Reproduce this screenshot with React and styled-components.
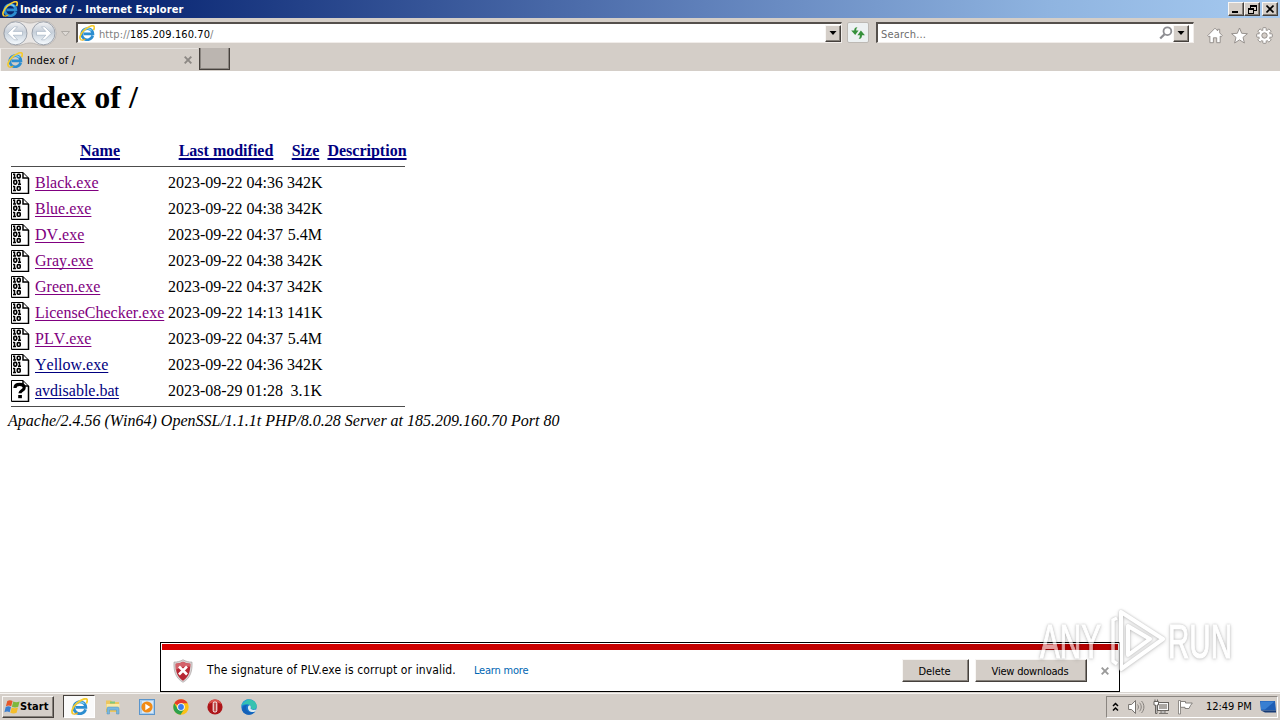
import React from "react";
import styled, { createGlobalStyle, css } from "styled-components";

const Global = createGlobalStyle`
  html, body { margin: 0; padding: 0; overflow: hidden; background: #fff; }
  * { box-sizing: border-box; }
  svg { display: block; flex: none; }
`;

const face = "#d4cec8";

const Screen = styled.div`
  position: relative;
  width: 1280px;
  height: 720px;
  display: flex;
  flex-direction: column;
  font-family: "DejaVu Sans Condensed", "DejaVu Sans", sans-serif;
  font-stretch: condensed;
  font-size: 11px;
  color: #000;
  overflow: hidden;
`;

const Label = styled.span`
  white-space: nowrap;
  line-height: 14px;
  font-size: ${(p) => p.$size || 11}px;
  letter-spacing: ${(p) => p.$track || 0}px;
  font-weight: ${(p) => (p.$bold ? 700 : 400)};
  color: ${(p) => p.$color || "#000"};
`;

const raised = css`
  border: 1px solid;
  border-color: #f8f6f4 #45403c #45403c #f8f6f4;
  box-shadow: inset -1px -1px 0 #85807a;
  background: ${face};
`;

/* ---------- title bar ---------- */
const TitleBar = styled.header`
  height: 18px;
  flex: none;
  display: flex;
  align-items: center;
  padding: 0 2px 0 2px;
  background: linear-gradient(90deg, #0a246a 0%, #0d2a76 12%, #5f80ba 55%, #8fb4e0 82%, #a6caf0 100%);
`;
const TitleText = styled(Label)`
  flex: 1;
  margin-left: 2px;
  padding-top: 1px;
`;
const CaptionButton = styled.div`
  ${raised}
  width: 16px;
  height: 14px;
  margin-left: ${(p) => p.$gap || 0}px;
  display: flex;
  align-items: center;
  justify-content: center;
`;

/* ---------- navigation bar ---------- */
const NavBar = styled.nav`
  height: 30px;
  flex: none;
  display: flex;
  align-items: flex-start;
  padding-left: 2px;
  background: ${face};
`;
const NavButtons = styled.div`
  width: 74px;
  padding-top: 2px;
`;
const Field = styled.div`
  width: ${(p) => p.$width}px;
  height: 21px;
  margin-top: 4px;
  display: flex;
  align-items: center;
  background: #fff;
  border: 1px solid;
  border-width: 2px 1px 1px 2px;
  border-color: #55504c #f1edea #f1edea #55504c;
  padding: 0 ${(p) => p.$right || 0}px 0 ${(p) => p.$left || 0}px;
`;
const FieldText = styled(Label)`
  flex: 1;
  margin-left: ${(p) => p.$left || 3}px;
  padding-top: 3px;
`;
const DropButton = styled.div`
  ${raised}
  width: 16px;
  height: 17px;
  display: flex;
  align-items: center;
  justify-content: center;
`;
const RefreshButton = styled.div`
  width: 22px;
  height: 21px;
  margin: 4px 7px 0 5px;
  border: 1px solid #bdb9b4;
  border-radius: 2px;
  background: #edf1f2;
  display: flex;
  align-items: center;
  justify-content: center;
`;
const Tools = styled.div`
  display: flex;
  gap: 8px;
  margin: 9px 0 0 13px;
`;

/* ---------- tabs ---------- */
const TabBar = styled.div`
  height: 23px;
  flex: none;
  display: flex;
  background: ${face};
`;
const Tab = styled.div`
  width: 198px;
  display: flex;
  align-items: center;
  padding: 0 6px 0 6px;
  border-left: 1px solid #f2efec;
  border-top: 1px solid #e6e2de;
`;
const TabText = styled(Label)`
  flex: 1;
  margin-left: 4px;
  padding-top: 2px;
`;
const NewTab = styled.div`
  width: 31px;
  height: 22px;
  margin-left: 1px;
  background: #bbb5b0;
  border: solid #45403c;
  border-width: 0 1px 1px 1px;
  box-shadow: inset 1px 0 0 #8a8580, inset -1px -1px 0 #8a8580;
`;

/* ---------- directory page ---------- */
const Page = styled.main`
  flex: 1;
  background: #fff;
  padding: 8px 8px 0;
  font-family: "Liberation Serif", "Times New Roman", serif;
  font-stretch: normal;
  font-kerning: none;
  font-size: 16px;
`;
const Heading = styled.h1`
  margin: 0 0 23px;
  font-size: 32px;
  line-height: 37px;
`;
const Listing = styled.table`
  width: 401px;
  table-layout: fixed;
  border-spacing: 2px;
  border-collapse: separate;
  line-height: 18px;
`;
const Row = styled.tr`
  height: ${(p) => p.$height || 24}px;
`;
const Cell = styled.td`
  padding: 0 1px;
  vertical-align: middle;
  white-space: nowrap;
  text-align: ${(p) => p.$align || "left"};
`;
const HeadCell = styled.th`
  padding: 0 0 0 2px;
  white-space: nowrap;
`;
const Link = styled.a`
  color: ${(p) => (p.$visited ? "#800080" : "#000080")};
  text-decoration: underline;
  text-decoration-thickness: ${(p) => (p.$thick ? 2 : 1)}px;
  text-underline-offset: 2px;
  text-decoration-skip-ink: none;
`;
const RuleCell = styled.td`
  padding: ${(p) => p.$top}px 2px 0 1px;
  vertical-align: top;
`;
const Rule = styled.div`
  height: 1px;
  background: #4c4c4c;
`;
const Footer = styled.address`
  line-height: 18px;
  margin-top: 2px;
  font-style: italic;
  white-space: nowrap;
`;

/* ---------- notification ---------- */
const Notice = styled.section`
  position: absolute;
  left: 160px;
  top: 642px;
  width: 960px;
  height: 50px;
  padding: 1px;
  background: #fff;
  border: 1px solid #000;
`;
const NoticeStripe = styled.div`
  height: 6px;
  background: linear-gradient(90deg, #d90000, #b40000);
`;
const NoticeBody = styled.div`
  height: 41px;
  display: flex;
  align-items: center;
  padding: 0 9px 0 11px;
`;
const NoticeText = styled(Label)`
  margin: 0 0 ${(p) => p.$bottom || 0}px ${(p) => p.$left}px;
`;
const Spacer = styled.div`
  flex: 1;
`;
const PushButton = styled.button`
  ${raised}
  width: ${(p) => p.$width}px;
  height: 23px;
  margin: 0 ${(p) => p.$gap}px 0 0;
  padding: 2px 2px 0 0;
  font: inherit;
`;

/* ---------- taskbar ---------- */
const Taskbar = styled.footer`
  height: 28px;
  flex: none;
  display: flex;
  align-items: center;
  background: ${face};
  border-top: 1px solid #d8d4cf;
  box-shadow: inset 0 1px 0 #f6f4f2;
  padding: 0 2px 0 2px;
`;
const StartButton = styled.div`
  ${raised}
  width: 52px;
  height: 22px;
  display: flex;
  align-items: center;
  padding-left: 1px;
`;
const TaskItems = styled.div`
  display: flex;
  margin-left: 9px;
  gap: 2px;
  flex: 1;
`;
const TaskItem = styled.div`
  width: 32px;
  height: 23px;
  display: flex;
  align-items: center;
  justify-content: center;
  ${(p) =>
    p.$active &&
    css`
      background: #fafafa;
      border: 1px solid;
      border-color: #45403c #fff #fff #45403c;
    `}
`;
const Tray = styled.div`
  width: 172px;
  height: 22px;
  display: flex;
  align-items: center;
  border: 1px solid;
  border-color: #8a8580 #fff #fff #8a8580;
  padding: 0 1px 0 5px;
`;
const TrayIcon = styled.div`
  margin-right: ${(p) => p.$gap}px;
`;

/* ---------- watermark ---------- */
const Watermark = styled.div`
  position: absolute;
  left: 1038px;
  top: 600px;
  width: 200px;
  height: 80px;
  filter: drop-shadow(0 0 1px rgba(0, 0, 0, 0.35)) drop-shadow(0 1px 2px rgba(0, 0, 0, 0.25));
  opacity: 0.62;
`;

/* ---------- icons ---------- */
const IELogo = ({ size = 16 }) => (
  <svg width={size} height={size} viewBox="0 0 16 16">
    <path d="M13.700 10.700A5.600 5.600 0 1 1 13.900 8.800H4.500" fill="none" stroke="#2b8dd0" strokeWidth="2.700" />
    <path d="M12.500 5.500A5.300 5.300 0 0 0 3.900 6.300" fill="none" stroke="#7fd0f5" strokeWidth="1.200" />
    <path d="M2.300 15C-.6 13.700 1.400 8.500 5.800 4.700 10.200 1 14.500-.4 15.200 1.700c.3 1.100-.1 2.300-.8 3.400" fill="none" stroke="#f4cb30" strokeWidth="1.700" />
    <path d="M2.300 15c1.200.4 2.700-.2 4-1" fill="none" stroke="#e3b021" strokeWidth="1.200" />
  </svg>
);

const BackForward = () => (
  <svg width="72" height="28" viewBox="0 0 72 28">
    <defs>
      <linearGradient id="orb" x1="0" y1="0" x2="0" y2="1">
        <stop offset="0" stopColor="#f3f3f4" />
        <stop offset=".45" stopColor="#c6cfd9" />
        <stop offset="1" stopColor="#f6fbff" />
      </linearGradient>
    </defs>
    <path d="M14 1c8 0 9 2 14 2s6-2 14-2a12.300 12.300 0 0 1 0 24.600c-7 0-8-2.600-14-2.600s-7 2.600-14 2.600A12.300 12.300 0 0 1 14 1z" fill="#e9e6e4" stroke="#b5b0ac" strokeWidth=".8" />
    {[13.5, 41.500].map((x) => (
      <circle key={x} cx={x} cy="13.300" r="11.500" fill="url(#orb)" stroke="#959ca6" strokeWidth=".9" />
    ))}
    <path d="M5.700 13.300l6.500-6.500h3.300l-4.300 4.600h9.300v3.800h-9.300l4.300 4.600h-3.300z" fill="#fff" stroke="#9dacbd" strokeWidth=".6" />
    <path d="M49.300 13.300l-6.500-6.500h-3.300l4.300 4.600h-9.300v3.800h9.300l-4.300 4.600h3.300z" fill="#fff" stroke="#9dacbd" strokeWidth=".6" />
    <path d="M59.500 11.500h8l-4 4.500z" fill="#dedad6" stroke="#aaa6a2" strokeWidth=".9" />
  </svg>
);

const Caret = () => (
  <svg width="8" height="4" viewBox="0 0 8 4">
    <path d="M.5 0h7L4 4z" fill="#000" />
  </svg>
);

const RefreshIcon = () => (
  <svg width="16" height="14" viewBox="0 0 16 14">
    <path d="M7.500 1.200C5.500 1 4.300 2 4.200 4.500H1.200l4 4.500 3.400-4.500H6.200C6.200 3 6.500 2 7.500 1.200z" fill="#36913b" />
    <path d="M8.500 12.800c2.200.2 3.400-.8 3.500-3.600h2.900l-4-4.800L7.400 9.200h2.500c0 1.600-.4 2.800-1.400 3.600z" fill="#36913b" />
  </svg>
);

const SearchIcon = () => (
  <svg width="14" height="14" viewBox="0 0 14 14">
    <circle cx="8.400" cy="5.200" r="3.900" fill="none" stroke="#8d8d92" strokeWidth="1.800" />
    <path d="M5.500 8.200L1.200 12.500" stroke="#8d8d92" strokeWidth="2.300" />
  </svg>
);

const HomeIcon = () => (
  <svg width="16" height="17" viewBox="0 0 16 17">
    <path d="M8 1.200l2.700 2.700V2.300h2v3.600L15.200 8.500l-1 1.300-1-.8v6.700H9.700V10.800H6.400v4.900H2.900V9l-1.100.8-1-1.300z" fill="#fff" stroke="#8d8884" strokeWidth=".9" />
  </svg>
);
const StarIcon = () => (
  <svg width="17" height="17" viewBox="0 0 17 17">
    <path d="M8.500 1l2.200 5.300 5.700.4-4.400 3.700 1.400 5.600-4.900-3.100L3.600 16 5 10.400.6 6.700l5.700-.4z" fill="#fff" stroke="#8d8884" strokeWidth=".9" />
  </svg>
);
const GearIcon = () => (
  <svg width="17" height="17" viewBox="0 0 17 17">
    {[0, 45, 90, 135].map((a) => (
      <rect key={a} x="6.800" y=".7" width="3.400" height="15.600" rx=".6" fill="#fff" stroke="#8d8884" strokeWidth=".9" transform={`rotate(${a} 8.500 8.500)`} />
    ))}
    <circle cx="8.500" cy="8.500" r="5.300" fill="#fff" />
    <circle cx="8.500" cy="8.500" r="2.700" fill={face} stroke="#8d8884" strokeWidth=".9" />
  </svg>
);

const Cross = ({ color = "#8c8884" }) => (
  <svg width="8" height="8" viewBox="0 0 8 8">
    <path d="M.7.7l6.600 6.600M7.300.7L.7 7.300" stroke={color} strokeWidth="1.900" />
  </svg>
);

const sheet = "M.5.5h11.500l5.500 5.500v15.500H.5z";
const One = ({ x, y }) => (
  <path d={`M${x} ${y + 0.700}h1.500M${x + 1.500} ${y}v5M${x} ${y + 4.500}h3`} fill="none" stroke="#000" strokeWidth="1.500" />
);
const Zero = ({ x, y }) => (
  <rect x={x + 0.800} y={y + 0.700} width="2.900" height="3.700" rx="1" fill="none" stroke="#000" strokeWidth="1.600" />
);
const BinaryIcon = () => (
  <svg width="20" height="22" viewBox="0 0 20 22">
    <path d={sheet} fill="#fff" stroke="#000" />
    <path d="M12 .5V6h5.500M17.500 6v15.500H1" fill="none" stroke="#000" strokeWidth="1.500" />
    <One x={2} y={1.500} />
    <Zero x={5.500} y={1.500} />
    <Zero x={2} y={7.700} />
    <One x={7} y={7.700} />
    <One x={2} y={13.900} />
    <Zero x={5.500} y={13.900} />
  </svg>
);
const UnknownIcon = () => (
  <svg width="20" height="22" viewBox="0 0 20 22">
    <path d={sheet} fill="#fff" stroke="#000" />
    <path d="M12 .5V6h5.500M17.500 6v15.500H1" fill="none" stroke="#000" strokeWidth="1.500" />
    <path d="M4 8C4 5 6 4.300 8.700 4.300s4.500 1 4.500 3.400c0 3-4.200 2.600-4.200 5.600" fill="none" stroke="#000" strokeWidth="3.200" />
    <rect x="7.200" y="15" width="3.700" height="3.200" fill="#000" />
  </svg>
);

const ShieldIcon = () => (
  <svg width="20" height="24" viewBox="0 0 20 24">
    <path d="M10 .7c2.600 1.700 5.700 2.400 9 2.400.5 8.500-1.400 16-9 20.200C2.400 19.100.5 11.600 1 3.100c3.300 0 6.400-.7 9-2.400z" fill="#d9d5d5" stroke="#aaa4a4" strokeWidth=".7" />
    <path d="M10 2.700c2.300 1.300 4.600 1.900 7.300 2 .2 7.500-1.500 13.300-7.300 17-5.800-3.700-7.500-9.500-7.300-17 2.700-.1 5-.7 7.300-2z" fill="#b72734" />
    <path d="M10 2.700c2.300 1.300 4.600 1.900 7.300 2l-.1 3C12 7 7 8 2.700 11V4.700c2.700-.1 5-.7 7.300-2z" fill="#d4626a" />
    <path d="M6 7.500l8 8M14 7.500l-8 8" stroke="#fff" strokeWidth="2.600" />
  </svg>
);

const WindowsFlag = () => (
  <svg width="16" height="16" viewBox="0 0 16 16">
    <path d="M3.300 2c2-1.200 3.500-1 5.300 0L7.200 7.200c-1.700-1-3.300-1-5.300 0z" fill="#e6572a" />
    <path d="M9.300 2.500c2 .9 3.900 1 6.300 0l-1.400 5.200c-2 1-4.200 1-6.300 0z" fill="#7db83d" />
    <path d="M1.700 8c2-1.200 3.500-1 5.300 0l-1.300 5.200c-1.700-1-3.300-1-5.300 0z" fill="#3c7fd0" />
    <path d="M7.700 8.500c2 .9 3.900 1 6.300 0l-1.400 5.200c-2 1-4.200 1-6.300 0z" fill="#f4bd2b" />
  </svg>
);
const FolderIcon = () => (
  <svg width="16" height="16" viewBox="0 0 16 16">
    <path d="M1 3V1.500h5L7.500 3H14v10H1z" fill="#ecc65f" />
    <path d="M1.500 5h13v5h-13z" fill="#fae9a4" />
    <path d="M5 2.500h5v2H5z" fill="#7fc87c" />
    <path d="M2 15V9.500C2 8.500 2.500 8 3.500 8h9c1 0 1.500.5 1.500 1.500V15h-2.500v-4h-7v4z" fill="#78b8df" stroke="#5191bf" strokeWidth=".5" />
  </svg>
);
const PlayerIcon = () => (
  <svg width="16" height="16" viewBox="0 0 16 16">
    <rect x=".5" y=".5" width="15" height="15" fill="#a8cdee" stroke="#5a95cc" />
    <rect x="3" y="2" width="11" height="12" fill="#d8e9f8" />
    <circle cx="8" cy="8" r="5.600" fill="#f18b16" />
    <path d="M6.300 4.800l5 3.200-5 3.200z" fill="#fff" />
  </svg>
);
const ChromeIcon = () => (
  <svg width="16" height="16" viewBox="0 0 16 16">
    <circle cx="8" cy="8" r="7.700" fill="#fbc116" />
    <path d="M8 8L1.300 4.200A7.700 7.700 0 0 1 14.700 4.200H8z" fill="#e33b2e" />
    <path d="M1.300 4.200A7.700 7.700 0 0 0 7.500 15.700L11.300 9.900 8 8 4.700 9.900z" fill="#2da14c" />
    <circle cx="8" cy="8" r="3.800" fill="#fff" />
    <circle cx="8" cy="8" r="2.900" fill="#3b7ded" />
  </svg>
);
const OperaIcon = () => (
  <svg width="16" height="16" viewBox="0 0 16 16">
    <circle cx="8" cy="8" r="7.600" fill="#ad1519" />
    <path d="M1.500 5A7 7 0 0 1 14.500 5 14 14 0 0 0 1.500 5z" fill="#d9534d" />
    <rect x="6.200" y="3" width="3.600" height="10" rx="1.400" fill="#c05450" stroke="#fff" strokeWidth="1" />
  </svg>
);
const EdgeIcon = () => (
  <svg width="16" height="16" viewBox="0 0 16 16">
    <circle cx="8" cy="8" r="7.700" fill="#1678cf" />
    <path d="M.4 7.200C1-1.700 14.500-1.700 15.700 6.500c.3 3.700-3 4.700-5.700 3.500.8-2.300-.5-4.500-3.500-4.800C3.500 5 1.500 5.900.4 7.200z" fill="#35c2b0" />
    <path d="M.4 7.200C1.300 3 4.500.5 8 .3 4.500 2 2.300 4 .4 7.200z" fill="#28a5dc" />
    <path d="M9 6.300c1.300 1.500.7 2.600.6 3.500 1.500 1.500 4 1.400 6 .1-.5 1.300-1.100 2.100-1.800 2.800C10 14 6.500 11.500 7 8c.2-1 .9-1.600 2-1.700z" fill="#dbe9ef" />
    <path d="M5 8c0 4 3.700 6.700 8.800 4.700C10.500 17 4.200 16.700 1.500 12 .4 8.500 2.500 5.800 6.500 6 5.500 6.500 5 7.200 5 8z" fill="#1460b8" />
  </svg>
);

const Chevrons = () => (
  <svg width="7" height="10" viewBox="0 0 7 10">
    <path d="M1 4l2.500-2.500L6 4M1 8.500L3.500 6 6 8.500" fill="none" stroke="#000" strokeWidth="1.500" />
  </svg>
);
const SpeakerIcon = () => (
  <svg width="17" height="16" viewBox="0 0 17 16">
    <path d="M.6 5.500h3L7.500 1.500v13L3.600 10.500h-3z" fill="#fff" stroke="#77736f" />
    <path d="M9.500 5.500c1.200 1.500 1.200 3.500 0 5M11.500 3.700c2.300 2.500 2.300 6 0 8.600M13.500 2c3.200 3.500 3.200 8.500 0 12" fill="none" stroke="#85817d" />
  </svg>
);
const NetworkIcon = () => (
  <svg width="16" height="16" viewBox="0 0 16 16">
    <rect x="4.500" y="3.500" width="11" height="8" fill="#aaa6a2" stroke="#66625e" />
    <rect x="5.500" y="4.500" width="9" height="6" fill="none" stroke="#f7f7f7" />
    <path d="M8 12h4v2H8zM6 14.500h9" fill="#fff" stroke="#77736f" />
    <path d="M1 2.500h4.500V6H4v8.500H2.500V6H1zM2 .5v2M4.500.5v2" fill="#fff" stroke="#66625e" />
  </svg>
);
const FlagIcon = () => (
  <svg width="16" height="16" viewBox="0 0 16 16">
    <path d="M1.500 1.500h2v13.500h-2z" fill="#fff" stroke="#7b7773" strokeWidth=".8" />
    <path d="M3.500 2.500h5V4h6.800l-1.800 2.500-1.500 3H8V8.300H3.500z" fill="#fff" stroke="#7b7773" strokeWidth=".9" />
  </svg>
);
const DesktopIcon = () => (
  <svg width="16" height="14" viewBox="0 0 16 14">
    <path d="M0 1h15l1 9.500H1z" fill="#1e5eb5" />
    <path d="M.5 1.500h14L5 9.500H1z" fill="#387fd2" />
    <path d="M1 10.500h15v2H5z" fill="#173b75" />
  </svg>
);

const files = [
  ["Black.exe", "2023-09-22 04:36", "342K", true],
  ["Blue.exe", "2023-09-22 04:38", "342K", true],
  ["DV.exe", "2023-09-22 04:37", "5.4M", true],
  ["Gray.exe", "2023-09-22 04:38", "342K", true],
  ["Green.exe", "2023-09-22 04:37", "342K", true],
  ["LicenseChecker.exe", "2023-09-22 14:13", "141K", true],
  ["PLV.exe", "2023-09-22 04:37", "5.4M", true],
  ["Yellow.exe", "2023-09-22 04:36", "342K", false],
  ["avdisable.bat", "2023-08-29 01:28", "3.1K", false],
];

const columnWidths = [22, 130, 118, 37, 82];

function DirectoryListing() {
  return (
    <Listing>
      <colgroup>
        {columnWidths.map((width, i) => (
          <col key={i} width={width} />
        ))}
      </colgroup>
      <tbody>
        <Row $height={20}>
          <HeadCell />
          {["Name", "Last modified", "Size", "Description"].map((h) => (
            <HeadCell key={h}>
              <Link $thick>{h}</Link>
            </HeadCell>
          ))}
        </Row>
        <Row $height={6}>
          <RuleCell colSpan={5} $top={3}><Rule /></RuleCell>
        </Row>
        {files.map(([name, date, size, visited]) => (
          <Row key={name}>
            <Cell>{name.endsWith(".exe") ? <BinaryIcon /> : <UnknownIcon />}</Cell>
            <Cell><Link $visited={visited}>{name}</Link></Cell>
            <Cell $align="right">{date}</Cell>
            <Cell $align="right">{size}</Cell>
            <Cell />
          </Row>
        ))}
        <Row $height={3}>
          <RuleCell colSpan={5} $top={1}><Rule /></RuleCell>
        </Row>
      </tbody>
    </Listing>
  );
}

export default function App() {
  return (
    <Screen>
      <Global />
      <TitleBar>
        <IELogo />
        <TitleText $bold $color="#fff" $track={0.14}>Index of / - Internet Explorer</TitleText>
        <CaptionButton>
          <svg width="8" height="8"><path d="M0 6h6v2H0z" /></svg>
        </CaptionButton>
        <CaptionButton>
          <svg width="9" height="9" viewBox="0 0 9 9" shapeRendering="crispEdges">
            <path d="M2.500 3V.5h6v5H6" fill="none" stroke="#000" />
            <path d="M2 1h7M0 4h6" stroke="#000" strokeWidth="2" />
            <path d="M.5 4v4.500h5V4" fill="none" stroke="#000" />
          </svg>
        </CaptionButton>
        <CaptionButton $gap={2}>
          <svg width="8" height="8" viewBox="0 0 8 8"><path d="M.5.5l7 7M7.500.5l-7 7" stroke="#000" strokeWidth="1.600" /></svg>
        </CaptionButton>
      </TitleBar>

      <NavBar>
        <NavButtons><BackForward /></NavButtons>
        <Field $width={766} $left={1}>
          <IELogo />
          <FieldText $color="#808080" $left={4} $track={0.1}>
            http://<Label $track={0.1}>185.209.160.70</Label>/
          </FieldText>
          <DropButton><Caret /></DropButton>
        </Field>
        <RefreshButton><RefreshIcon /></RefreshButton>
        <Field $width={318} $right={4}>
          <FieldText $color="#6d6d6d" $track={0.2}>Search...</FieldText>
          <SearchIcon />
          <DropButton><Caret /></DropButton>
        </Field>
        <Tools>
          <HomeIcon />
          <StarIcon />
          <GearIcon />
        </Tools>
      </NavBar>

      <TabBar>
        <Tab>
          <IELogo />
          <TabText $track={0.2}>Index of /</TabText>
          <Cross />
        </Tab>
        <NewTab />
      </TabBar>

      <Page>
        <Heading>Index of /</Heading>
        <DirectoryListing />
        <Footer>Apache/2.4.56 (Win64) OpenSSL/1.1.1t PHP/8.0.28 Server at 185.209.160.70 Port 80</Footer>
      </Page>

      <Taskbar>
        <StartButton>
          <WindowsFlag />
          <Label $bold $track={0.1}>Start</Label>
        </StartButton>
        <TaskItems>
          <TaskItem $active><IELogo size={17} /></TaskItem>
          <TaskItem><FolderIcon /></TaskItem>
          <TaskItem><PlayerIcon /></TaskItem>
          <TaskItem><ChromeIcon /></TaskItem>
          <TaskItem><OperaIcon /></TaskItem>
          <TaskItem><EdgeIcon /></TaskItem>
        </TaskItems>
        <Tray>
          <TrayIcon $gap={9}><Chevrons /></TrayIcon>
          <TrayIcon $gap={8}><SpeakerIcon /></TrayIcon>
          <TrayIcon $gap={8}><NetworkIcon /></TrayIcon>
          <TrayIcon $gap={13}><FlagIcon /></TrayIcon>
          <Label $track={-0.05}>12:49 PM</Label>
          <Spacer />
          <DesktopIcon />
        </Tray>
      </Taskbar>

      <Notice>
        <NoticeStripe />
        <NoticeBody>
          <ShieldIcon />
          <NoticeText $size={12} $left={14} $bottom={1} $track={0.13}>The signature of PLV.exe is corrupt or invalid.</NoticeText>
          <NoticeText $left={18} $track={-0.2} $color="#0066b3">Learn more</NoticeText>
          <Spacer />
          <PushButton $width={67} $gap={6}><Label $track={-0.1}>Delete</Label></PushButton>
          <PushButton $width={112} $gap={14}><Label $track={-0.2}>View downloads</Label></PushButton>
          <Cross color="#9a9a9a" />
        </NoticeBody>
      </Notice>

      <Watermark>
        <svg width="200" height="80" viewBox="0 0 200 80" overflow="visible" fontFamily="'Liberation Sans Narrow', 'Liberation Sans', sans-serif" fontSize="49" fill="#fff" stroke="#fff" strokeWidth="1.200">
          <text x="2" y="58" textLength="61" lengthAdjust="spacingAndGlyphs">ANY</text>
          <text x="130" y="58" textLength="64" lengthAdjust="spacingAndGlyphs">RUN</text>
          <path d="M83 12v57l42-30z M90 26v29l22-16z" fill="none" strokeWidth="4" strokeLinejoin="round" />
          <path d="M79 18l-4 2v41l4 3" fill="none" strokeWidth="3.500" />
        </svg>
      </Watermark>
    </Screen>
  );
}
